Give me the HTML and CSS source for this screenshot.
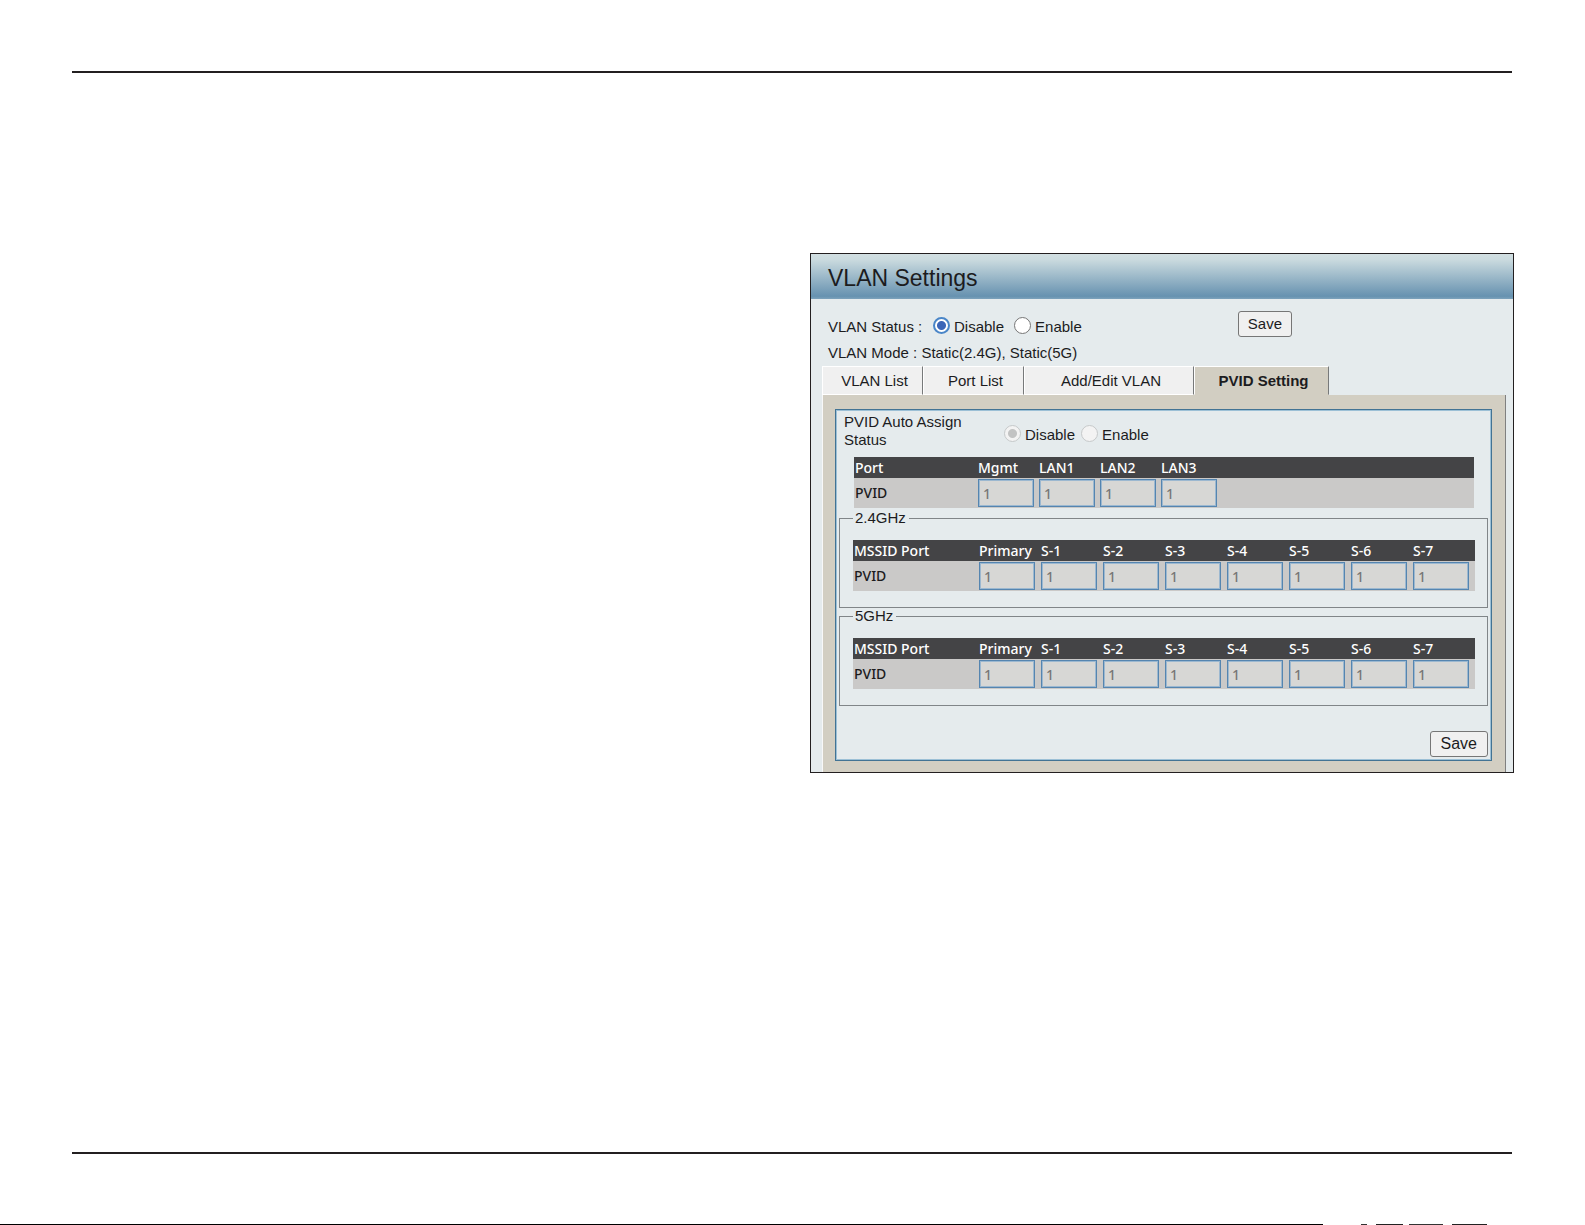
FILE: index.html
```html
<!DOCTYPE html>
<html lang="en">
<head>
    <meta charset="UTF-8">
    <meta name="viewport" content="width=device-width, initial-scale=1.0">
    <title>VLAN Settings</title>
    <link rel="stylesheet" href="styles.css">
</head>
<body>

<hr class="rule">

<main class="content">
    <section class="panel">
        <h1 class="panel-title">VLAN Settings</h1>

        <form class="status">
            <span class="status-label">VLAN Status :</span>
            <label class="radio"><input type="radio" name="vlanStatus" checked>Disable</label>
            <label class="radio"><input type="radio" name="vlanStatus">Enable</label>
            <button type="button" class="btn status-save">Save</button>
        </form>
        <p class="mode">VLAN Mode : Static(2.4G), Static(5G)</p>

        <div class="tabs">
            <button type="button" class="tab">VLAN List</button>
            <button type="button" class="tab">Port List</button>
            <button type="button" class="tab tab-wide">Add/Edit VLAN</button>
            <button type="button" class="tab tab-active">PVID Setting</button>
        </div>

        <div class="tab-body">
            <form class="box">
                <div class="assign">
                    <span class="assign-label">PVID Auto Assign Status</span>
                    <label class="radio"><input type="radio" name="pvidAssign" checked disabled>Disable</label>
                    <label class="radio"><input type="radio" name="pvidAssign" disabled>Enable</label>
                </div>

                <table class="ports lan">
                    <tr><th class="name">Port</th><th>Mgmt</th><th>LAN1</th><th>LAN2</th><th>LAN3</th><th class="rest"></th></tr>
                    <tr>
                        <td>PVID</td>
                        <td><input type="text" value="1" aria-label="Mgmt" disabled></td>
                        <td><input type="text" value="1" aria-label="LAN1" disabled></td>
                        <td><input type="text" value="1" aria-label="LAN2" disabled></td>
                        <td><input type="text" value="1" aria-label="LAN3" disabled></td>
                        <td></td>
                    </tr>
                </table>

                <fieldset>
                    <legend>2.4GHz</legend>
                    <table class="ports">
                        <tr><th class="name">MSSID Port</th><th>Primary</th><th>S-1</th><th>S-2</th><th>S-3</th><th>S-4</th><th>S-5</th><th>S-6</th><th>S-7</th></tr>
                        <tr>
                            <td>PVID</td>
                            <td><input type="text" value="1" aria-label="2.4GHz Primary" disabled></td>
                            <td><input type="text" value="1" aria-label="2.4GHz S-1" disabled></td>
                            <td><input type="text" value="1" aria-label="2.4GHz S-2" disabled></td>
                            <td><input type="text" value="1" aria-label="2.4GHz S-3" disabled></td>
                            <td><input type="text" value="1" aria-label="2.4GHz S-4" disabled></td>
                            <td><input type="text" value="1" aria-label="2.4GHz S-5" disabled></td>
                            <td><input type="text" value="1" aria-label="2.4GHz S-6" disabled></td>
                            <td><input type="text" value="1" aria-label="2.4GHz S-7" disabled></td>
                        </tr>
                    </table>
                </fieldset>

                <fieldset>
                    <legend>5GHz</legend>
                    <table class="ports">
                        <tr><th class="name">MSSID Port</th><th>Primary</th><th>S-1</th><th>S-2</th><th>S-3</th><th>S-4</th><th>S-5</th><th>S-6</th><th>S-7</th></tr>
                        <tr>
                            <td>PVID</td>
                            <td><input type="text" value="1" aria-label="5GHz Primary" disabled></td>
                            <td><input type="text" value="1" aria-label="5GHz S-1" disabled></td>
                            <td><input type="text" value="1" aria-label="5GHz S-2" disabled></td>
                            <td><input type="text" value="1" aria-label="5GHz S-3" disabled></td>
                            <td><input type="text" value="1" aria-label="5GHz S-4" disabled></td>
                            <td><input type="text" value="1" aria-label="5GHz S-5" disabled></td>
                            <td><input type="text" value="1" aria-label="5GHz S-6" disabled></td>
                            <td><input type="text" value="1" aria-label="5GHz S-7" disabled></td>
                        </tr>
                    </table>
                </fieldset>

                <div class="actions">
                    <button type="button" class="btn btn-large">Save</button>
                </div>
            </form>
        </div>
    </section>
</main>

<hr class="rule">
<div class="page-end"></div>

</body>
</html>
```
FILE: styles.css
```css
* {
    box-sizing: border-box;
}
body {
    margin: 0;
    padding-top: 71px;
    min-height: 100vh;
    display: flex;
    flex-direction: column;
    background-color: #fff;
    color: #1c1c1e;
    font-family: "Liberation Sans", Arial, sans-serif;
    font-size: 15px;
    line-height: 20px;
}
button, input {
    font: inherit;
    color: inherit;
}
.rule {
    width: auto;
    height: 2px;
    margin: 0 73px 0 72px;
    border: none;
    background-color: #231f20;
}
.content {
    flex: 1;
    display: grid;
    grid-template-columns: 739fr 704fr;
    align-items: start;
    padding: 180px 71px 0;
}
.panel {
    grid-column: 2;
    border: 1px solid #231f20;
    background-color: #e5ebed;
}
.panel-title {
    margin: 0;
    padding: 0 17px;
    font-size: 23px;
    font-weight: normal;
    line-height: 48px;
    height: 45px;
    background: linear-gradient(#d2dfe2, #cbdbdf 12%, #6792b0 94%, #7ea3bc);
}

/* status rows */
.status {
    display: flex;
    align-items: flex-end;
    height: 38px;
    padding: 12px 0 0 17px;
}
.status-label {
    width: 105px;
}
.radio {
    display: flex;
    gap: 4px;
    margin-right: 10px;
}
.radio input {
    appearance: none;
    width: 17px;
    height: 17px;
    margin: 0;
    padding: 2px;
    border: 1px solid #767676;
    border-radius: 50%;
    background: #fff;
}
.radio input:checked {
    border: 2px solid #4a86c8;
    background: radial-gradient(circle, #3c66b8 4px, #fff 5px);
}
.radio input:disabled {
    border: 1px solid #c6c9ca;
    background: #f3f3f3;
}
.radio input:checked:disabled {
    background: radial-gradient(circle, #c2c3c3 4px, #f3f3f3 5px);
}
.status-save {
    margin-left: auto;
    margin-right: 221px;
}
.mode {
    margin: 6px 0 3px 17px;
}
.btn {
    height: 26px;
    padding: 0 9px;
    border: 1px solid #767676;
    border-radius: 3px;
    background-color: #f0f0f0;
    line-height: 24px;
}
.btn-large {
    padding: 0 10px;
    font-size: 16px;
}

/* tabs */
.tabs {
    display: flex;
    margin-left: 11px;
}
.tab {
    width: 101px;
    height: 29px;
    padding: 0 0 0 4px;
    border: 1px solid #fff;
    border-right: 1px solid #77797a;
    background-color: #f0f0f0;
    white-space: nowrap;
}
.tab-wide {
    width: 170px;
}
.tab-active {
    width: 135px;
    border-bottom-color: #d2cec2;
    background-color: #d2cec2;
    font-weight: bold;
}
.tab-body {
    margin: 0 7px 0 11px;
    padding: 14px 13px 11px 12px;
    border-left: 1px solid #f8f8f8;
    border-right: 1px solid #808080;
    background-color: #d2cec2;
}
.box {
    padding: 3px 2px 2px;
    border: 1px solid #427394;
    outline: 1px solid #9cc0d6;
    outline-offset: -2px;
    background-color: #e5ebed;
}
.assign {
    display: flex;
    align-items: flex-end;
    padding: 0 0 0 6px;
}
.assign-label {
    width: 140px;
    margin-right: 20px;
    line-height: 18px;
}
.assign .radio {
    margin-right: 6px;
    padding-bottom: 4px;
}

/* port tables */
.ports {
    width: 100%;
    table-layout: fixed;
    border-collapse: collapse;
    font-family: "Noto Sans", Tahoma, sans-serif;
    font-size: 14px;
    font-weight: 500;
}
.lan {
    width: auto;
    min-width: calc(100% - 31px);
    margin: 8px 15px 3px 16px;
}
.ports th {
    height: 21px;
    padding: 0;
    background-color: #444446;
    color: #fff;
    font-weight: 500;
    line-height: 20px;
    text-align: left;
    white-space: nowrap;
}
.ports td {
    height: 30px;
    padding: 0;
    background-color: #cac9c8;
}
.ports .name {
    width: 126px;
}
.ports th:first-child, .ports td:first-child {
    padding-left: 1px;
}
.lan th {
    width: 61px;
}
.lan .name {
    width: 124px;
}
.lan .rest {
    width: auto;
}
.ports input {
    display: block;
    width: 56px;
    height: 28px;
    padding: 0 4px;
    border: 1px solid #5585b0;
    outline: 1px solid #9cb8d0;
    outline-offset: -2px;
    background-color: #d7d7d5;
    color: #777;
}
fieldset {
    min-width: 0;
    margin: 0 1px 1px;
    padding: 15px 12px 16px 13px;
    border: 1px solid #808588;
}
legend {
    padding: 0 3px 0 2px;
    line-height: 14px;
}
.actions {
    display: flex;
    justify-content: flex-end;
    padding: 24px 1px 1px;
}

/* black edge that closes the page, broken up at the right */
.page-end {
    height: 1px;
    margin-top: 70px;
    background: linear-gradient(to right, #000 1323px, transparent 1323px 1361px, #333 1361px 1367px, transparent 1367px 1376px, #222 1376px 1403px, transparent 1403px 1409px, #333 1409px 1443px, transparent 1443px 1452px, #222 1452px 1487px, transparent 1487px);
}
```
